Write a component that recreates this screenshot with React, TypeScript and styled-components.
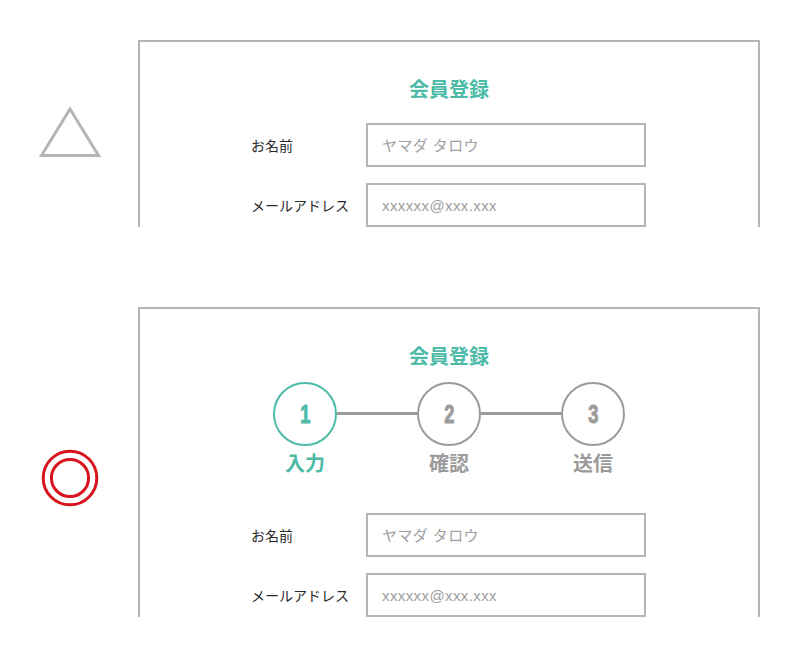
import React from "react";
import styled, { createGlobalStyle } from "styled-components";

const teal = "#4dbba7";
const gray = "#9b9b9b";
const line = "#b5b5b5";

const GlobalStyle = createGlobalStyle`
  body {
    margin: 0;
    background: #fff;
    font-family: "Noto Sans CJK JP", "Noto Sans", sans-serif;
  }
`;

const Page = styled.div`
  padding-top: 40px;
  display: flex;
  flex-direction: column;
  gap: 80px;
`;

const Section = styled.section`
  display: flex;
`;

const MarkCol = styled.div<{ $top: number }>`
  width: 138px;
  flex: none;
  display: flex;
  justify-content: center;
  align-items: flex-start;
  padding-top: ${(p) => p.$top}px;
  padding-left: 2px;
  box-sizing: border-box;
`;

const Panel = styled.div`
  width: 622px;
  box-sizing: border-box;
  border: 2px solid ${line};
  border-bottom: none;
  padding-top: 32px;
`;

const Title = styled.h2<{ $gap: number }>`
  margin: 0 0 ${(p) => p.$gap}px;
  text-align: center;
  font-size: 20px;
  line-height: 30px;
  font-weight: 700;
  color: ${teal};
`;

const Steps = styled.div`
  display: flex;
  justify-content: center;
  margin-bottom: 35px;
`;

const Step = styled.div`
  width: 64px;
  display: flex;
  flex-direction: column;
  align-items: center;
`;

const Circle = styled.div<{ $active?: boolean }>`
  width: 64px;
  height: 64px;
  box-sizing: border-box;
  border-radius: 50%;
  border: 2px solid ${(p) => (p.$active ? teal : gray)};
  color: ${(p) => (p.$active ? teal : gray)};
  display: flex;
  align-items: center;
  justify-content: center;
`;

const Digit = styled.span`
  display: inline-block;
  font-family: "Liberation Sans", "DejaVu Sans", sans-serif;
  font-weight: 700;
  font-size: 26px;
  line-height: 1;
  -webkit-text-stroke: 1px currentColor;
  transform: scaleX(0.7);
`;

const StepLabel = styled.span<{ $active?: boolean }>`
  margin-top: 2px;
  white-space: nowrap;
  font-size: 20px;
  line-height: 30px;
  font-weight: 700;
  color: ${(p) => (p.$active ? teal : gray)};
`;

const Connector = styled.div`
  width: 80px;
  height: 3px;
  margin-top: 30px;
  background: ${gray};
`;

const Form = styled.div`
  display: flex;
  flex-direction: column;
  gap: 16px;
  padding-left: 111px;
`;

const Row = styled.label`
  display: grid;
  grid-template-columns: 115px 280px;
  align-items: center;
`;

const Label = styled.span`
  font-size: 14px;
  color: #2b2b2b;
`;

const Input = styled.input`
  height: 44px;
  box-sizing: border-box;
  border: 2px solid ${line};
  border-radius: 0;
  padding: 0 14px;
  font-family: "Liberation Sans", "Noto Sans CJK JP", sans-serif;
  font-size: 15px;
  letter-spacing: 0.4px;
  color: #333;
  outline: none;
  background: #fff;

  &::placeholder {
    color: #9e9e9e;
  }
`;

const Triangle = () => (
  <svg width="62" height="54" viewBox="0 0 62 54">
    <polygon points="31,3 2.5,49.5 59.5,49.5" fill="none" stroke={line} strokeWidth="3" />
  </svg>
);

const DoubleCircle = () => (
  <svg width="60" height="60" viewBox="0 0 60 60">
    <circle cx="30" cy="30" r="26.8" fill="none" stroke="#d7141e" strokeWidth="3" />
    <circle cx="30" cy="30" r="18.6" fill="none" stroke="#d7141e" strokeWidth="3" />
  </svg>
);

const fields = [
  { label: "お名前", placeholder: "ヤマダ タロウ" },
  { label: "メールアドレス", placeholder: "xxxxxx@xxx.xxx" },
];

const steps = ["入力", "確認", "送信"];

const Fields = () => (
  <Form>
    {fields.map((f) => (
      <Row key={f.label}>
        <Label>{f.label}</Label>
        <Input placeholder={f.placeholder} />
      </Row>
    ))}
  </Form>
);

const App = () => {
  return (
    <Page>
      <GlobalStyle />
      <Section>
        <MarkCol $top={66}>
          <Triangle />
        </MarkCol>
        <Panel>
          <Title $gap={19}>会員登録</Title>
          <Fields />
        </Panel>
      </Section>
      <Section>
        <MarkCol $top={141}>
          <DoubleCircle />
        </MarkCol>
        <Panel>
          <Title $gap={11}>会員登録</Title>
          <Steps>
            {steps.map((s, i) => (
              <React.Fragment key={s}>
                {i > 0 && <Connector />}
                <Step>
                  <Circle $active={i === 0}>
                    <Digit>{i + 1}</Digit>
                  </Circle>
                  <StepLabel $active={i === 0}>{s}</StepLabel>
                </Step>
              </React.Fragment>
            ))}
          </Steps>
          <Fields />
        </Panel>
      </Section>
    </Page>
  );
};

export default App;
